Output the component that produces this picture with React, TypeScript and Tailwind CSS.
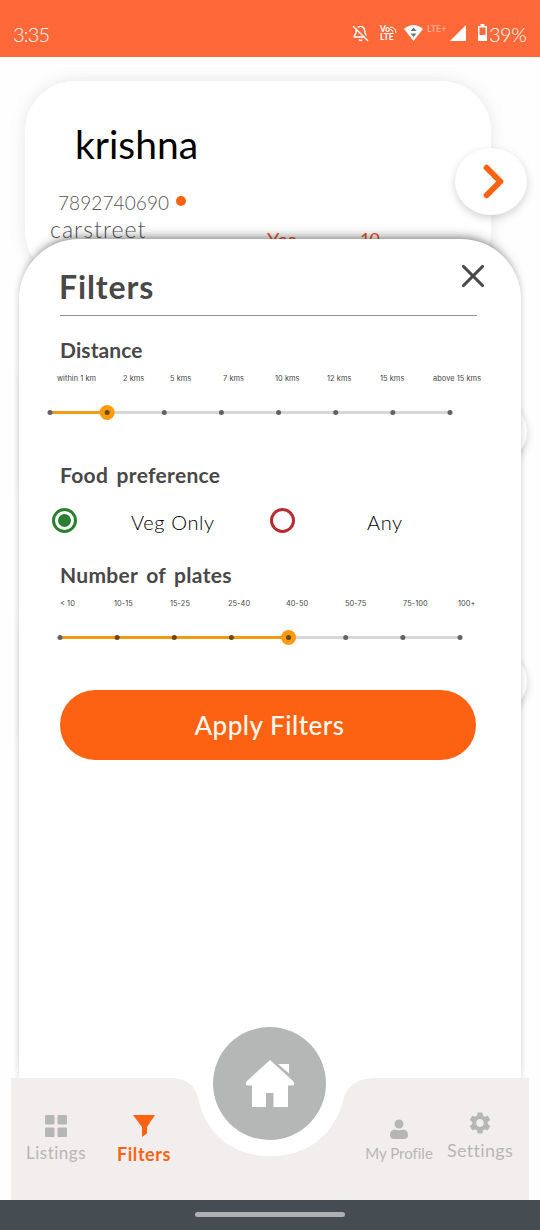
import { BellOff, ChevronRight, X } from "lucide-react";
import type { ReactNode } from "react";
import { MdSettings } from "react-icons/md";

const distances = [
  { label: "within 1 km", box: "w-[66px]" },
  { label: "2 kms", box: "w-[47px]" },
  { label: "5 kms", box: "w-[53px]" },
  { label: "7 kms", box: "w-[52px]" },
  { label: "10 kms", box: "w-[52px]" },
  { label: "12 kms", box: "w-[53px]" },
  { label: "15 kms", box: "w-[53px]" },
  { label: "above 15 kms", box: "w-[50px]" },
];

const plates = [
  { label: "< 10", box: "w-[54px]" },
  { label: "10-15", box: "w-[56px]" },
  { label: "15-25", box: "w-[58px]" },
  { label: "25-40", box: "w-[58px]" },
  { label: "40-50", box: "w-[59px]" },
  { label: "50-75", box: "w-[58px]" },
  { label: "75-100", box: "w-[55px]" },
  { label: "100+", box: "w-[20px]" },
];

function Labels({ items }: { items: { label: string; box: string }[] }) {
  return (
    <div className="flex h-3 items-center font-['Inter',sans-serif] text-[7.4px] leading-3 tracking-[0.06px] text-[#444]">
      {items.map((i) => (
        <span key={i.label} className={`shrink-0 whitespace-nowrap ${i.box}`}>
          {i.label}
        </span>
      ))}
    </div>
  );
}

function Slider({ value }: { value: number }) {
  const step = 400 / 7;
  return (
    <svg width="416" height="16" viewBox="-8 -7.5 416 16" className="block">
      <path d="M0 0H400" stroke="#d8d8d8" strokeWidth="3" />
      <path d={`M0 0H${value * step}`} stroke="#f39a12" strokeWidth="3" />
      <circle cx={value * step} cy="0" r="7.5" fill="#fb9a0a" />
      {Array.from({ length: 8 }, (_, i) => (
        <circle
          key={i}
          cx={i * step}
          cy="0"
          r="2.5"
          fill={i === 0 || i > value ? "#626262" : "#6b4714"}
        />
      ))}
    </svg>
  );
}

function Card({ children }: { children?: ReactNode }) {
  return (
    <div className="relative h-[200px] w-[466px] shrink-0 rounded-[50px] bg-white shadow-[0_0_16px_rgba(0,0,0,0.1)]">
      {children}
      <div className="absolute top-[67px] -right-9 flex h-[67px] w-[72px] items-center justify-center rounded-[50%] bg-white pl-1 shadow-[0_3px_8px_rgba(0,0,0,0.18)]">
        <ChevronRight className="h-[55px] w-[55px] text-[#fd6212]" strokeWidth={2.6} />
      </div>
    </div>
  );
}

function StatusBar() {
  return (
    <header className="flex h-[57px] items-center bg-[#ff6838] px-[13px] pt-3 font-['Lato',sans-serif] text-white">
      <span className="pb-px text-[20px] font-light tracking-[-0.8px]">3:35</span>
      <BellOff className="mb-[2px] ml-auto h-[17px] w-[17px]" strokeWidth={2} />
      <div className="mb-[3px] ml-[11px] flex w-[17px] flex-col text-[8.5px] leading-[8px] font-bold">
        <span className="flex items-center">
          Vo
          <svg width="7" height="7" viewBox="0 0 7 7" fill="none" stroke="white">
            <path d="M0 1q6 0 6 6M0 3.5q3 0 3 3" />
          </svg>
        </span>
        <span>LTE</span>
      </div>
      <svg className="mb-1 ml-[7px]" width="19" height="16" viewBox="0 0 19 16">
        <path d="M0 4Q9.5 -4 19 4L9.5 16Z" fill="white" />
        <path d="M6.5 6 9.5 2.5 12.5 6ZM6.5 8.5h6L9.5 12Z" fill="#68757c" />
      </svg>
      <span className="mb-3 ml-1 w-[20px] text-[9px] leading-3 font-bold tracking-[-0.1px] text-[#ffab8e]">
        LTE+
      </span>
      <svg className="mb-1 ml-[3px]" width="16" height="16" viewBox="0 0 16 16">
        <path d="M16 0V16H0Z" fill="white" />
      </svg>
      <svg className="mb-1 ml-[12px]" width="9" height="17" viewBox="0 0 9 17">
        <path
          fillRule="evenodd"
          d="M2.5 0h4v2H9V17H0V2h2.5ZM1.5 3.5V11h6V3.5Z"
          fill="white"
        />
      </svg>
      <span className="ml-[2px] w-[38px] pb-px text-[20px] font-light tracking-[-0.5px]">39%</span>
    </header>
  );
}

function FilterSheet() {
  return (
    <section className="absolute top-[239px] left-[19px] h-[845px] w-[502px] rounded-t-[60px] bg-white pl-[41px] font-['Lato',sans-serif] text-[#484848] shadow-[0_-9px_12px_-8px_rgba(0,0,0,0.5),0_0_6px_rgba(0,0,0,0.14)]">
      <div className="flex h-[76px] w-[432px] items-start justify-between">
        <h2 className="-ml-px pt-[28px] text-[32px] leading-10 font-bold tracking-[0.9px]">
          Filters
        </h2>
        <X className="mt-[18px] h-[38px] w-[38px]" strokeWidth={2} />
      </div>
      <hr className="w-[417px] border-[#929292]" />
      <h3 className="mt-[21px] text-[21px] leading-[26px] font-bold tracking-[0.1px]">Distance</h3>
      <div className="mt-[10px] -ml-[3px]">
        <Labels items={distances} />
      </div>
      <div className="mt-5 -ml-[18px]">
        <Slider value={1} />
      </div>
      <h3 className="mt-[41px] text-[21px] leading-[26px] font-bold tracking-[0.3px] [word-spacing:3px]">
        Food preference
      </h3>
      <div className="mt-[19px] -ml-2 flex h-[26px] items-center text-[20px] font-light text-black">
        <span className="flex h-[25px] w-[25px] items-center justify-center rounded-full border-3 border-[#2b7f30]">
          <span className="h-[13px] w-[13px] rounded-full bg-[#2b7f30]" />
        </span>
        <span className="ml-[54px] w-[84px] pt-1 tracking-[0.6px] whitespace-nowrap">Veg Only</span>
        <span className="ml-[55px] h-[25px] w-[25px] rounded-full border-3 border-[#b52d32]" />
        <span className="ml-[72px] pt-1 tracking-[0.6px]">Any</span>
      </div>
      <h3 className="mt-[29px] text-[21px] leading-[26px] font-bold tracking-[0.3px] [word-spacing:3px]">
        Number of plates
      </h3>
      <div className="mt-[10px]">
        <Labels items={plates} />
      </div>
      <div className="mt-5 -ml-2">
        <Slider value={4} />
      </div>
      <button className="mt-[44px] flex h-[70px] w-[416px] items-center justify-center rounded-full bg-[#fd6212] pl-[3px] text-[26px] font-medium tracking-[0.5px] text-[#fffaf0]">
        Apply Filters
      </button>
    </section>
  );
}

function BottomNav() {
  return (
    <nav className="absolute bottom-[30px] left-[11px] h-[173px] w-[518px] font-['Lato',sans-serif] text-[#b5b7b6] [font-variant-ligatures:none]">
      <svg className="absolute inset-0" width="518" height="173" viewBox="11 1027 518 173">
        <path
          d="M11 1078H172C188 1078 196 1087 199 1101C207 1135 234 1156 270 1156C306 1156 333 1137 343 1101C346 1086 357 1078 374 1078H529V1200H11Z"
          fill="#f2eeed"
        />
        <path
          d="M172 1078C188 1078 196 1087 199 1101C207 1135 234 1156 270 1156C306 1156 333 1137 343 1101C346 1086 357 1078 374 1078Z"
          fill="white"
        />
        <circle cx="269.5" cy="1083.5" r="56.5" fill="#b5b7b6" />
        <path
          d="M270 1060L293 1081Q296 1085 292 1085.5H288V1107H273.5V1093H266V1107H252V1085.5H248Q244 1085 247 1081Z"
          fill="white"
        />
        <path d="M278 1064H289V1073.5Z" fill="white" />
      </svg>
      <div className="relative flex h-full pt-[76px]">
        <div className="flex w-[90px] flex-col items-center pt-[12px]">
          <svg width="22" height="22" viewBox="0 0 22 22" fill="currentColor">
            <rect width="9.5" height="9.5" rx="1" />
            <rect x="12.5" width="9.5" height="9.5" rx="1" />
            <rect y="12.5" width="9.5" height="9.5" rx="1" />
            <rect x="12.5" y="12.5" width="9.5" height="9.5" rx="1" />
          </svg>
          <span className="mt-[4px] text-[17px] leading-6 tracking-[0.5px]">Listings</span>
        </div>
        <div className="flex w-[86px] flex-col items-center pt-[12px] text-[#fd6212]">
          <svg width="22" height="22" viewBox="0 0 22 22" fill="currentColor">
            <path d="M0 0H22L14 12V18.5L9 22V12Z" />
          </svg>
          <span className="mt-[5px] text-[18px] leading-6 font-bold tracking-[0.6px]">Filters</span>
        </div>
        <div className="ml-auto flex w-[76px] flex-col items-center pt-[16px]">
          <svg width="18" height="20" viewBox="0 0 18 20" fill="currentColor">
            <circle cx="9" cy="5" r="4.5" />
            <path d="M4.5 10.5Q9 12 13.5 10.5Q18 11 18 16Q18 20 14 20H4Q0 20 0 16Q0 11 4.5 10.5Z" />
          </svg>
          <span className="mt-[2px] text-[15px] leading-6 whitespace-nowrap">My Profile</span>
        </div>
        <div className="mr-[6px] flex w-[86px] flex-col items-center pt-[7px]">
          <MdSettings className="h-[26px] w-[26px]" />
          <span className="mt-[2px] text-[18px] leading-6 tracking-[0.3px]">Settings</span>
        </div>
      </div>
    </nav>
  );
}

export default function App() {
  return (
    <div className="relative flex h-[1230px] w-[540px] flex-col overflow-hidden bg-[#fefefe]">
      <StatusBar />
      <main className="flex flex-1 flex-col gap-[50px] overflow-hidden pt-6 pl-[25px] font-['Lato',sans-serif]">
        <Card>
          <h1 className="pt-[39px] pl-[50px] text-[39px] leading-[48px] text-black">krishna</h1>
          <p className="mt-[23px] ml-[33px] flex h-6 items-center text-[19px] font-light tracking-[0.1px] text-[#555]">
            7892740690
            <span className="mb-1 ml-[7px] h-[10px] w-[10px] rounded-full bg-[#fd6212]" />
          </p>
          <div className="-mt-[2px] ml-[25px] flex text-[23px] leading-8 font-light text-[#555]">
            <span className="w-[217px] tracking-[1.05px]">carstreet</span>
            <span className="w-[93px] pt-[10px] text-[20px] font-normal text-[#f25022]">Yes</span>
            <span className="pt-[10px] text-[18px] font-normal tracking-[-1px] text-[#f25022]">10</span>
          </div>
        </Card>
        <Card />
        <Card />
      </main>
      <FilterSheet />
      <BottomNav />
      <footer className="flex h-[30px] shrink-0 items-center justify-center bg-[#454d53]">
        <div className="-mt-px h-[5px] w-[150px] rounded-full bg-[#adb0b5]" />
      </footer>
    </div>
  );
}
